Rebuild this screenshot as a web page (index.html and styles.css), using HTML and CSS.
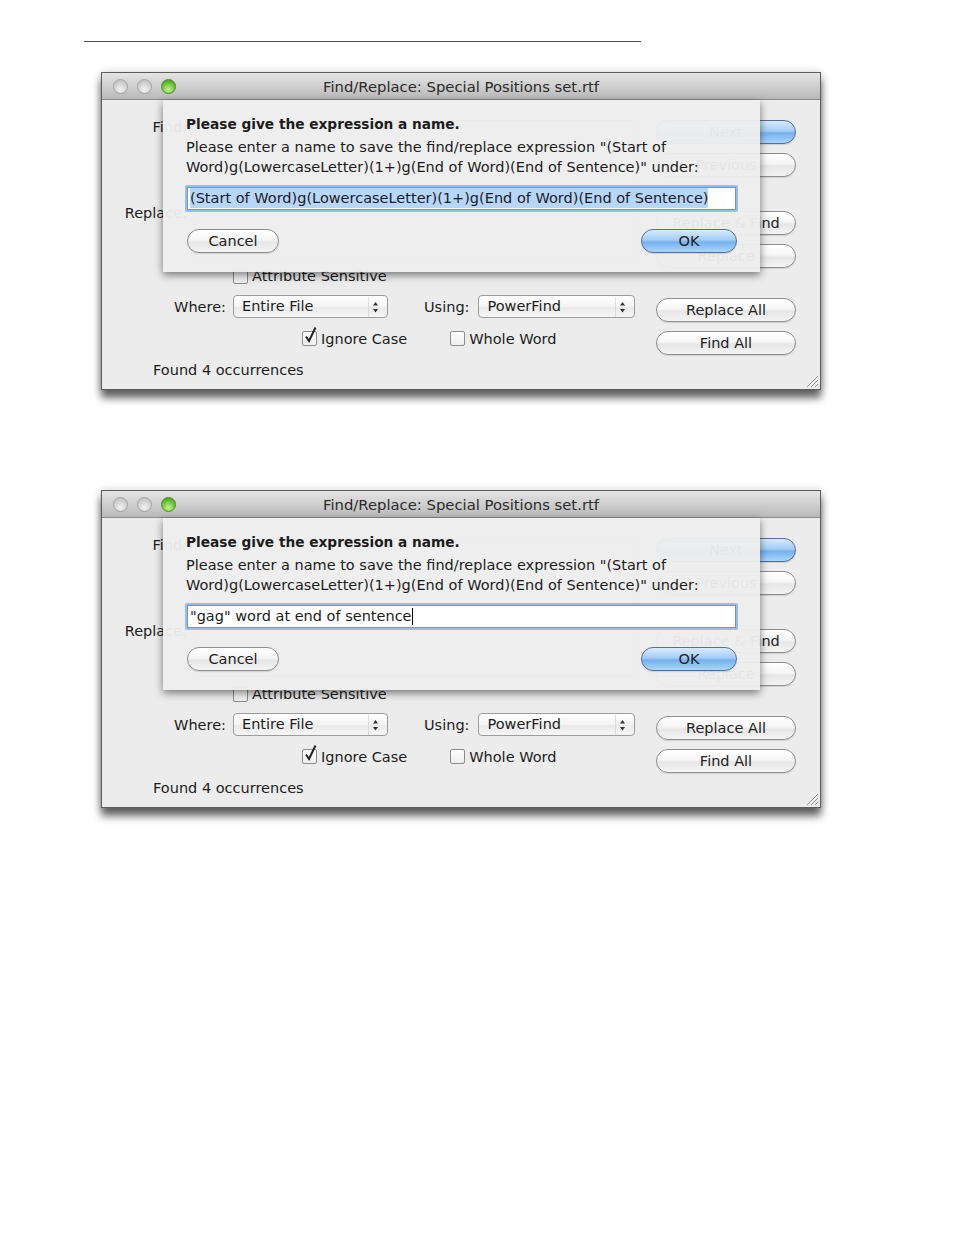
FILE: index.html
```html
<!DOCTYPE html>
<html lang="en">
<head>
  <meta charset="UTF-8">
  <title>Find/Replace: Special Positions set.rtf</title>
  <link rel="stylesheet" href="styles.css">
</head>
<body>
  <div class="page">
    <div class="rule"></div>

    <!-- first shot: default name selected -->
    <div class="window">
      <div class="titlebar">
        <div class="lights">
          <span class="light"></span>
          <span class="light"></span>
          <span class="light light-green"></span>
        </div>
        <div class="title">Find/Replace: Special Positions set.rtf</div>
        <div></div>
      </div>
      <div class="window-body">
        <div class="panel">
          <div class="fields">
            <div class="field-row find-row">
              <span class="label">Find:</span>
              <div class="text-box"></div>
            </div>
            <div class="field-row replace-row">
              <span class="label">Replace:</span>
              <div class="text-box"></div>
            </div>
            <div class="check attr-check"><span class="box"></span>Attribute Sensitive</div>
            <div class="where-row">
              <span class="where-label">Where:</span>
              <div class="popup">Entire File
                <svg class="arrows" width="14" height="20" viewBox="0 0 14 20"><path d="M0 0V20" stroke="#c4c4c4"/><path d="M5 8.5L7.5 5 10 8.5Z M5 12L7.5 15.5 10 12Z" fill="#333"/></svg>
              </div>
              <span class="using-label">Using:</span>
              <div class="popup popup-wide">PowerFind
                <svg class="arrows" width="14" height="20" viewBox="0 0 14 20"><path d="M0 0V20" stroke="#c4c4c4"/><path d="M5 8.5L7.5 5 10 8.5Z M5 12L7.5 15.5 10 12Z" fill="#333"/></svg>
              </div>
            </div>
            <div class="options-row">
              <div class="check"><span class="box"><svg width="15" height="17" viewBox="0 0 15 17"><path d="M3 9.5L6 14 12.5 0.5" fill="none" stroke="#222" stroke-width="2"/></svg></span>Ignore Case</div>
              <div class="check whole-word"><span class="box"></span>Whole Word</div>
            </div>
            <div class="status">Found 4 occurrences</div>
          </div>
          <div class="buttons">
            <div class="btn btn-default">Next</div>
            <div class="btn">Previous</div>
            <div class="btn btn-group">Replace &amp; Find</div>
            <div class="btn">Replace</div>
            <div class="btn btn-group-small">Replace All</div>
            <div class="btn">Find All</div>
          </div>
        </div>

        <div class="sheet">
          <div class="sheet-title">Please give the expression a name.</div>
          <div class="sheet-msg">Please enter a name to save the find/replace expression "(Start of<br>Word)g(LowercaseLetter)(1+)g(End of Word)(End of Sentence)" under:</div>
          <div class="name-field"><span class="selected">(Start of Word)g(LowercaseLetter)(1+)g(End of Word)(End of Sentence)</span></div>
          <div class="sheet-buttons">
            <div class="btn btn-cancel">Cancel</div>
            <div class="btn btn-ok">OK</div>
          </div>
        </div>

        <svg class="grip" width="13" height="13" viewBox="0 0 13 13"><path d="M1 12L12 1M5 12L12 5M9 12L12 9" stroke="#9a9a9a"/></svg>
      </div>
    </div>

    <!-- second shot: name typed in -->
    <div class="window">
      <div class="titlebar">
        <div class="lights">
          <span class="light"></span>
          <span class="light"></span>
          <span class="light light-green"></span>
        </div>
        <div class="title">Find/Replace: Special Positions set.rtf</div>
        <div></div>
      </div>
      <div class="window-body">
        <div class="panel">
          <div class="fields">
            <div class="field-row find-row">
              <span class="label">Find:</span>
              <div class="text-box"></div>
            </div>
            <div class="field-row replace-row">
              <span class="label">Replace:</span>
              <div class="text-box"></div>
            </div>
            <div class="check attr-check"><span class="box"></span>Attribute Sensitive</div>
            <div class="where-row">
              <span class="where-label">Where:</span>
              <div class="popup">Entire File
                <svg class="arrows" width="14" height="20" viewBox="0 0 14 20"><path d="M0 0V20" stroke="#c4c4c4"/><path d="M5 8.5L7.5 5 10 8.5Z M5 12L7.5 15.5 10 12Z" fill="#333"/></svg>
              </div>
              <span class="using-label">Using:</span>
              <div class="popup popup-wide">PowerFind
                <svg class="arrows" width="14" height="20" viewBox="0 0 14 20"><path d="M0 0V20" stroke="#c4c4c4"/><path d="M5 8.5L7.5 5 10 8.5Z M5 12L7.5 15.5 10 12Z" fill="#333"/></svg>
              </div>
            </div>
            <div class="options-row">
              <div class="check"><span class="box"><svg width="15" height="17" viewBox="0 0 15 17"><path d="M3 9.5L6 14 12.5 0.5" fill="none" stroke="#222" stroke-width="2"/></svg></span>Ignore Case</div>
              <div class="check whole-word"><span class="box"></span>Whole Word</div>
            </div>
            <div class="status">Found 4 occurrences</div>
          </div>
          <div class="buttons">
            <div class="btn btn-default">Next</div>
            <div class="btn">Previous</div>
            <div class="btn btn-group">Replace &amp; Find</div>
            <div class="btn">Replace</div>
            <div class="btn btn-group-small">Replace All</div>
            <div class="btn">Find All</div>
          </div>
        </div>

        <div class="sheet">
          <div class="sheet-title">Please give the expression a name.</div>
          <div class="sheet-msg">Please enter a name to save the find/replace expression "(Start of<br>Word)g(LowercaseLetter)(1+)g(End of Word)(End of Sentence)" under:</div>
          <div class="name-field">"gag" word at end of sentence<span class="caret"></span></div>
          <div class="sheet-buttons">
            <div class="btn btn-cancel">Cancel</div>
            <div class="btn btn-ok">OK</div>
          </div>
        </div>

        <svg class="grip" width="13" height="13" viewBox="0 0 13 13"><path d="M1 12L12 1M5 12L12 5M9 12L12 9" stroke="#9a9a9a"/></svg>
      </div>
    </div>
  </div>
</body>
</html>
```

FILE: styles.css
```css
body {
  margin: 0;
  background-color: #fff;
  font-family: "DejaVu Sans", "Liberation Sans", sans-serif;
  font-size: 14.5px;
  color: #1c1c1c;
}

.page {
  padding: 41px 0 120px;
}

.rule {
  margin-left: 84px;
  width: 557px;
  height: 1px;
  background-color: #4a4a4a;
}

/* Window */
.window {
  margin: 30px 0 0 101px;
  width: 720px;
  height: 318px;
  box-sizing: border-box;
  border: 1px solid #5c5c5c;
  display: flex;
  flex-direction: column;
  background-color: #ececec;
  box-shadow: 0 0 8px rgba(0, 0, 0, 0.18), 0 8px 8px rgba(0, 0, 0, 0.6);
}

.window + .window {
  margin-top: 100px;
}

.titlebar {
  height: 27px;
  box-sizing: border-box;
  display: grid;
  grid-template-columns: 1fr auto 1fr;
  align-items: center;
  background: linear-gradient(#e4e4e4, #cfcfcf 50%, #b9b9b9);
  border-bottom: 1px solid #8a8a8a;
}

.lights {
  display: flex;
  gap: 9px;
  padding-left: 11px;
  padding-top: 1px;
}

.light {
  width: 15px;
  height: 15px;
  box-sizing: border-box;
  border-radius: 50%;
  border: 1px solid #a2a2a2;
  background: radial-gradient(circle at 50% 75%, #f2f2f2, #d2d2d2 55%, #b9b9b9);
}

.light-green {
  border-color: #4f8a2b;
  background: radial-gradient(circle at 50% 75%, #c8f58e, #6cc43a 55%, #3d8c1c);
}

.title {
  font-size: 14.8px;
  color: #2b2b2b;
  padding-top: 1px;
}

.window-body {
  position: relative;
  flex: 1;
}

.panel {
  display: flex;
  justify-content: space-between;
  padding: 20px 24px 0 0;
}

.fields {
  flex: 1;
  display: flex;
  flex-direction: column;
}

.field-row {
  display: flex;
}

.label {
  width: 85px;
  text-align: right;
  line-height: 14px;
}

.find-row {
  height: 85px;
}

.replace-row {
  height: 63px;
}

.replace-row .label {
  line-height: 16px;
}

.text-box {
  margin-left: 8px;
  width: 440px;
  height: 64px;
  border: 1px solid #b4b4b4;
  background-color: #fff;
}

.replace-row .text-box {
  height: 52px;
}

.check {
  display: flex;
  align-items: center;
  gap: 4px;
}

.box {
  position: relative;
  width: 15px;
  height: 15px;
  box-sizing: border-box;
  border: 1px solid #8c8c8c;
  border-radius: 2px;
  background: linear-gradient(#fff, #ededed);
}

.box svg {
  position: absolute;
  left: 0;
  top: -5px;
}

.attr-check {
  margin-left: 131px;
  height: 16px;
}

.where-row {
  margin-top: 11px;
  height: 23px;
  display: flex;
  align-items: center;
}

.where-label {
  width: 124px;
  text-align: right;
  margin-right: 7px;
}

.using-label {
  margin-left: 36px;
  margin-right: 9px;
}

.popup {
  position: relative;
  width: 155px;
  height: 23px;
  box-sizing: border-box;
  padding-left: 8px;
  line-height: 21px;
  border: 1px solid #9c9c9c;
  border-radius: 4px;
  background: linear-gradient(#fff, #f4f4f4 50%, #e9e9e9 51%, #f6f6f6);
}

.popup-wide {
  width: 157px;
}

.arrows {
  position: absolute;
  right: 5px;
  top: 1px;
}

.options-row {
  margin-top: 12px;
  height: 17px;
  display: flex;
  align-items: center;
  padding-left: 200px;
}

.whole-word {
  margin-left: 43px;
}

.status {
  margin-top: 15px;
  padding-left: 51px;
  line-height: 16px;
}

/* Buttons */
.buttons {
  width: 140px;
  display: flex;
  flex-direction: column;
  gap: 9px;
}

.btn {
  height: 24px;
  box-sizing: border-box;
  border: 1px solid #8e8e8e;
  border-radius: 12px;
  text-align: center;
  line-height: 22px;
  color: #222;
  background: linear-gradient(#fff, #f6f6f6 45%, #e6e6e6 55%, #f4f4f4);
  box-shadow: 0 1px 1px rgba(0, 0, 0, 0.12);
}

.btn-default,
.btn-ok {
  border-color: #536f9c;
  background: linear-gradient(#d9ebfc, #a4cdf6 45%, #75b1ee 55%, #a9d6fb);
}

.btn-group {
  margin-top: 25px;
}

.btn-group-small {
  margin-top: 21px;
}

/* Sheet dropped over the window */
.sheet {
  position: absolute;
  top: 0;
  left: 61px;
  width: 597px;
  height: 172px;
  box-sizing: border-box;
  padding: 16px 22px 0 23px;
  background-color: rgba(237, 237, 237, 0.96);
  box-shadow: 0 3px 8px rgba(0, 0, 0, 0.5);
}

.sheet-title {
  font-weight: bold;
  font-size: 13.7px;
  line-height: 17px;
}

.sheet-msg {
  margin-top: 4px;
  line-height: 20px;
}

.name-field {
  margin: 8px 0 0 -1px;
  height: 27px;
  box-sizing: border-box;
  padding-left: 3px;
  border: 2px solid #97bdea;
  border-radius: 2px;
  box-shadow: inset 0 0 0 1px #7196cf;
  background-color: #fff;
  line-height: 23px;
  white-space: nowrap;
}

.selected {
  background-color: #b7d6fb;
  padding: 2px 0;
}

.caret {
  display: inline-block;
  width: 1px;
  height: 17px;
  vertical-align: -4px;
  background-color: #000;
}

.sheet-buttons {
  margin-top: 17px;
  display: flex;
  justify-content: space-between;
}

.btn-cancel {
  width: 92px;
  margin-left: 1px;
}

.btn-ok {
  width: 96px;
  margin-right: 1px;
}

.grip {
  position: absolute;
  right: 1px;
  bottom: 1px;
}
```
